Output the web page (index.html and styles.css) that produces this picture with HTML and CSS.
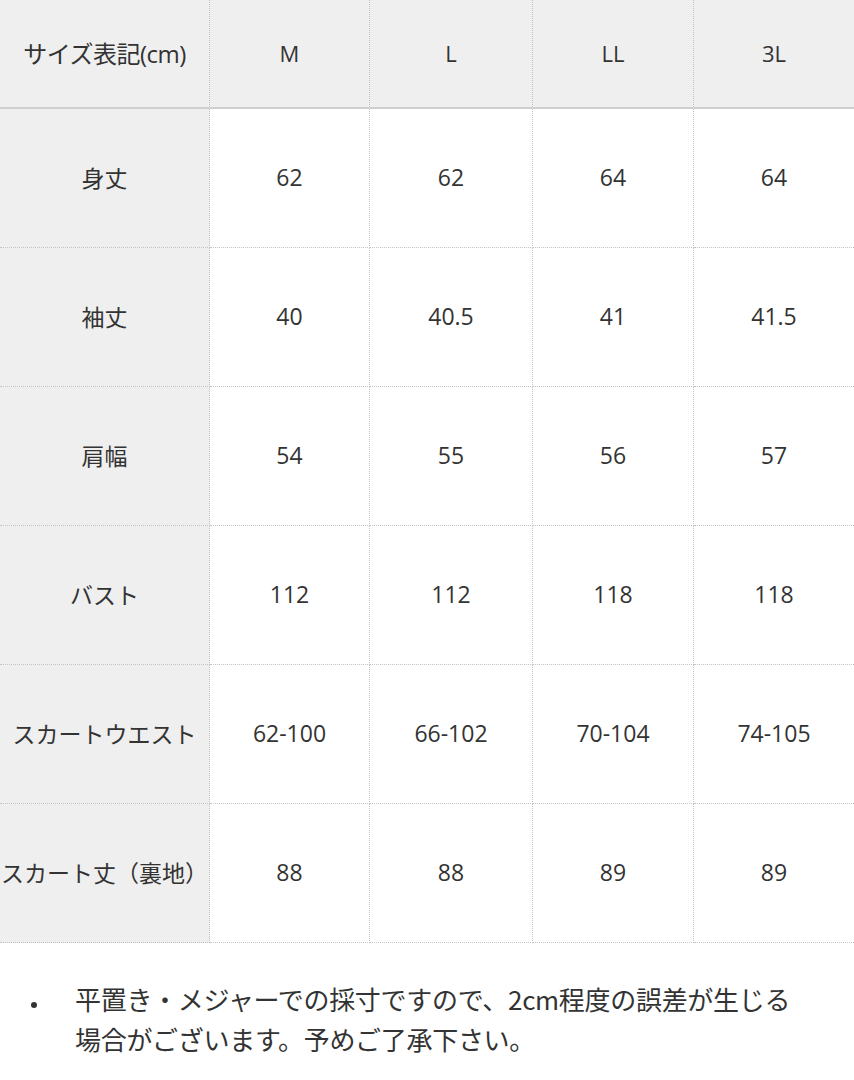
FILE: index.html
```html
<!DOCTYPE html>
<html lang="ja">
<head>
<meta charset="utf-8">
<link rel="stylesheet" href="styles.css">
</head>
<body>
<div class="sheet">
  <div class="table">
    <div class="cell head label">サイズ表記(cm)</div>
    <div class="cell head">M</div>
    <div class="cell head">L</div>
    <div class="cell head">LL</div>
    <div class="cell head last">3L</div>

    <div class="cell label">身丈</div>
    <div class="cell">62</div><div class="cell">62</div><div class="cell">64</div><div class="cell last">64</div>

    <div class="cell label">袖丈</div>
    <div class="cell">40</div><div class="cell">40.5</div><div class="cell">41</div><div class="cell last">41.5</div>

    <div class="cell label">肩幅</div>
    <div class="cell">54</div><div class="cell">55</div><div class="cell">56</div><div class="cell last">57</div>

    <div class="cell label">バスト</div>
    <div class="cell">112</div><div class="cell">112</div><div class="cell">118</div><div class="cell last">118</div>

    <div class="cell label">スカートウエスト</div>
    <div class="cell">62-100</div><div class="cell">66-102</div><div class="cell">70-104</div><div class="cell last">74-105</div>

    <div class="cell label">スカート丈（裏地）</div>
    <div class="cell">88</div><div class="cell">88</div><div class="cell">89</div><div class="cell last">89</div>
  </div>
  <ul class="notes">
    <li>平置き・メジャーでの採寸ですので、2cm程度の誤差が生じる<br>場合がございます。予めご了承下さい。</li>
  </ul>
</div>
</body>
</html>
```
FILE: styles.css
```css
html, body {
  margin: 0;
  padding: 0;
  background: #ffffff;
}
body {
  font-family: "Open Sans", "Noto Sans CJK JP", sans-serif;
  color: #333333;
}
.sheet {
  width: 854px;
  height: 1080px;
  overflow: hidden;
}
.table {
  display: grid;
  grid-template-columns: 210px 160px 163px 161px 160px;
  grid-template-rows: 109px repeat(6, 139px);
}
.cell {
  box-sizing: border-box;
  display: flex;
  align-items: center;
  justify-content: center;
  font-size: 23px;
  white-space: nowrap;
  border-right: 1px dotted #c4c4c4;
  border-bottom: 1px dotted #c4c4c4;
  background: #ffffff;
  padding-bottom: 2px;
}
.cell.last {
  border-right: none;
}
.cell.head {
  background: #efefef;
  border-bottom: 2px solid #cfcfcf;
  font-size: 22px;
}
.cell.label {
  background: #efefef;
  font-family: "Noto Sans CJK JP", sans-serif;
  font-size: 23px;
}
.cell.head.label {
  font-family: "Open Sans", "Noto Sans CJK JP", sans-serif;
  font-size: 24px;
  letter-spacing: -0.5px;
}
.notes {
  margin: 0;
  padding: 36px 20px 0 75px;
  font-family: "Noto Sans CJK JP", sans-serif;
  font-size: 26px;
  line-height: 40px;
  color: #333333;
}
.notes li {
  list-style: none;
  position: relative;
  letter-spacing: -0.3px;
}
.notes li::before {
  content: "";
  position: absolute;
  left: -44px;
  top: 23px;
  width: 6px;
  height: 6px;
  border-radius: 50%;
  background: #333333;
}
```
